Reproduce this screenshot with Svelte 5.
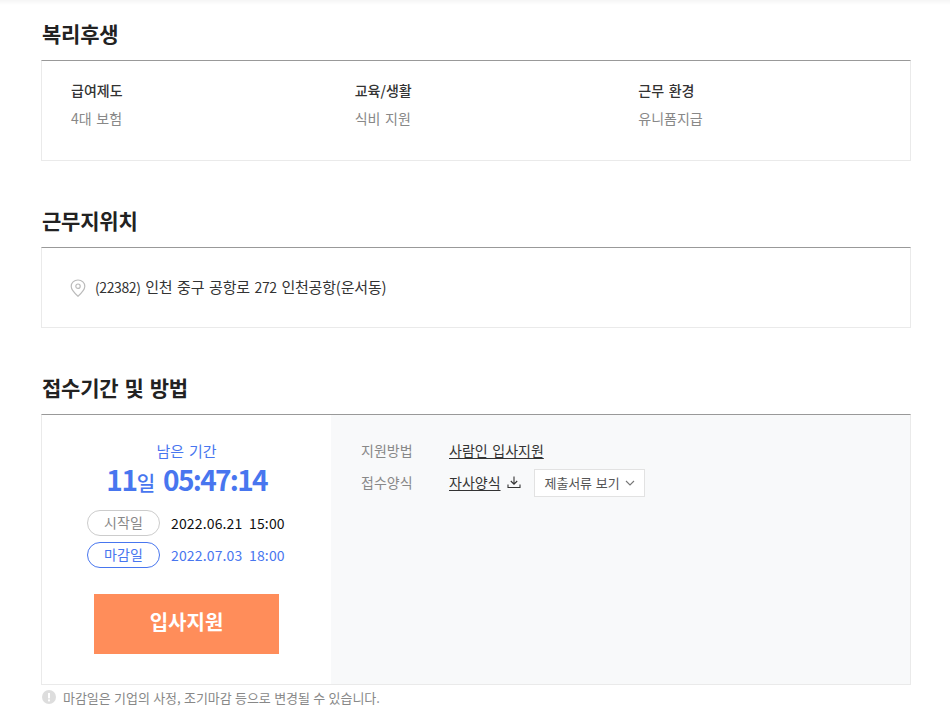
<script>
  const welfare = [
    { title: '급여제도', value: '4대 보험' },
    { title: '교육/생활', value: '식비 지원' },
    { title: '근무 환경', value: '유니폼지급' }
  ];
</script>

<main class="page">
  <section class="welfare">
    <h2>복리후생</h2>
    <div class="box cols">
      {#each welfare as item (item.title)}
        <dl>
          <dt>{item.title}</dt>
          <dd>{item.value}</dd>
        </dl>
      {/each}
    </div>
  </section>

  <section class="location">
    <h2>근무지위치</h2>
    <div class="box address">
      <svg class="pin" viewBox="0 0 16 18" width="16" height="18" aria-hidden="true">
        <path d="M8 1 C4 1 1.2 3.9 1.2 7.3 C1.2 10.6 5 14.6 8 17.2 C11 14.6 14.8 10.6 14.8 7.3 C14.8 3.9 12 1 8 1 Z" />
        <circle cx="8" cy="7.2" r="2.2" />
      </svg>
      <span class="address-text"><span class="num">(22382)</span> 인천 중구 공항로 <span class="num">272</span> 인천공항(운서동)</span>
    </div>
  </section>

  <section class="apply">
    <h2>접수기간 및 방법</h2>
    <div class="box split">
      <div class="period">
        <p class="left-label">남은 기간</p>
        <p class="left-time"><b>11</b><span>일</span> <b class="clock">05:47:14</b></p>
        <div class="dates">
          <div class="date">
            <span class="tag">시작일</span>
            <span>2022.06.21 &nbsp;15:00</span>
          </div>
          <div class="date end">
            <span class="tag">마감일</span>
            <span>2022.07.03 &nbsp;18:00</span>
          </div>
        </div>
        <button class="apply-btn">입사지원</button>
      </div>
      <div class="method">
        <div class="row">
          <span class="key">지원방법</span>
          <a href="#top">사람인 입사지원</a>
        </div>
        <div class="row">
          <span class="key">접수양식</span>
          <a href="#top">자사양식</a>
          <svg class="download" viewBox="0 0 14 14" width="14" height="14" aria-hidden="true">
            <path d="M7 1.5 V9 M3.8 6 L7 9.2 L10.2 6 M1 9.5 V12.5 H13 V9.5" />
          </svg>
          <button class="docs">
            <span>제출서류 보기</span>
            <svg viewBox="0 0 10 6" width="10" height="6" aria-hidden="true"><path d="M1 1 L5 5 L9 1" /></svg>
          </button>
        </div>
      </div>
    </div>
    <p class="note">
      <svg viewBox="0 0 14 14" width="14" height="14" aria-hidden="true">
        <circle cx="7" cy="7" r="7" fill="#ddd" />
        <rect x="6" y="3" width="2" height="5.4" fill="#fff" />
        <rect x="6" y="9.4" width="2" height="2" fill="#fff" />
      </svg>
      마감일은 기업의 사정, 조기마감 등으로 변경될 수 있습니다.
    </p>
  </section>
</main>

<style>
  :global(body) {
    margin: 0;
    background: #fff;
    font-family: "Noto Sans CJK KR", "Noto Sans", sans-serif;
    color: #222;
  }

  .page {
    height: 721px;
    box-sizing: border-box;
    padding: 0 39px 0 41px;
    overflow: hidden;
    word-spacing: 1.5px;
    background: linear-gradient(#f5f5f5, #fff 5px);
  }

  section {
    display: block;
  }

  h2 {
    margin: 0;
    height: 26px;
    padding-left: 1px;
    font-size: 21px;
    line-height: 26px;
    font-weight: 700;
    color: #222;
    letter-spacing: -0.2px;
  }

  .welfare {
    padding-top: 20px;
  }

  .location {
    padding-top: 46px;
  }

  .apply {
    padding-top: 46px;
  }

  .box {
    margin-top: 14px;
    box-sizing: border-box;
    border: 1px solid #eaeaea;
    border-top-color: #999;
  }

  .cols {
    display: grid;
    grid-template-columns: repeat(3, 283.67px);
    height: 101px;
    padding: 19px 0 0 29px;
  }

  dl {
    margin: 0;
  }

  dt {
    font-size: 14px;
    line-height: 20px;
    font-weight: 500;
    color: #333;
  }

  dd {
    margin: 8px 0 0;
    font-size: 14px;
    line-height: 20px;
    color: #888;
  }

  .address {
    display: flex;
    align-items: center;
    gap: 9px;
    height: 81px;
    padding: 0 0 0 28px;
    font-size: 15px;
    color: #333;
  }

  .address-text {
    margin-top: -2px;
    letter-spacing: -0.18px;
  }

  .num {
    font-size: 14px;
    letter-spacing: -0.4px;
  }

  .pin path,
  .pin circle {
    fill: none;
    stroke: #bbb;
    stroke-width: 1.2;
  }

  .split {
    display: flex;
    height: 271px;
    border-bottom-color: #eaeaea;
  }

  .period {
    width: 289px;
    flex: none;
    text-align: center;
    padding-top: 26px;
    box-sizing: border-box;
  }

  p {
    margin: 0;
  }

  .left-label {
    font-size: 15px;
    line-height: 20px;
    color: #4876ef;
  }

  .left-time {
    height: 36px;
    font-size: 28px;
    line-height: 36px;
    color: #4876ef;
    letter-spacing: -1.2px;
    word-spacing: 4px;
  }

  .left-time b {
    font-weight: 700;
  }

  .left-time .clock {
    letter-spacing: -1.7px;
  }

  .left-time span {
    font-size: 20px;
    font-weight: 500;
  }

  .dates {
    margin-top: 13px;
    display: flex;
    flex-direction: column;
    gap: 6px;
    padding-left: 45px;
  }

  .date {
    display: flex;
    align-items: center;
    gap: 11px;
    height: 26px;
    font-size: 14px;
    color: #111;
    word-spacing: 0;
    letter-spacing: 0.15px;
  }

  .tag {
    box-sizing: border-box;
    width: 73px;
    height: 26px;
    border: 1px solid #ccc;
    border-radius: 13px;
    font-size: 14px;
    line-height: 23px;
    color: #888;
    text-align: center;
  }

  .end {
    color: #4876ef;
  }

  .end .tag {
    border-color: #4876ef;
    color: #4876ef;
  }

  .apply-btn {
    display: block;
    margin: 26px auto 0;
    width: 185px;
    height: 60px;
    border: 0;
    padding: 0 0 5px;
    background: #ff8d5a;
    color: #fff;
    font: 700 20px "Noto Sans CJK KR", sans-serif;
  }

  .method {
    flex: 1;
    background: #f8f9fa;
    padding: 21px 0 0 30px;
  }

  .row {
    display: flex;
    align-items: center;
    height: 28px;
    margin-bottom: 4px;
    font-size: 14px;
  }

  .key {
    width: 88px;
    color: #888;
  }

  .row a {
    color: #333;
    text-decoration: underline;
    text-underline-offset: 2px;
  }

  .download {
    margin-left: 6px;
  }

  .download path {
    fill: none;
    stroke: #333;
    stroke-width: 1.1;
  }

  .docs {
    margin: 1px 0 0 13px;
    box-sizing: border-box;
    display: flex;
    align-items: center;
    justify-content: space-between;
    height: 28px;
    width: 111px;
    padding: 0 9px 0 10px;
    border: 1px solid #e2e2e2;
    background: #fff;
    color: #555;
    font: 400 13px "Noto Sans CJK KR", sans-serif;
    letter-spacing: -0.1px;
    word-spacing: 1px;
    white-space: nowrap;
  }

  .docs svg {
    flex: none;
  }

  .docs path {
    fill: none;
    stroke: #777;
    stroke-width: 1.1;
  }

  .note {
    display: flex;
    align-items: center;
    gap: 7px;
    margin-top: 3px;
    margin-left: 1px;
    height: 18px;
    font-size: 13px;
    color: #888;
    letter-spacing: -0.04px;
    word-spacing: 0.5px;
  }
</style>
